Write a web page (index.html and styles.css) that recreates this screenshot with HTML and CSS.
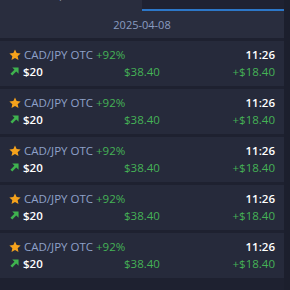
FILE: index.html
```html
<!DOCTYPE html>
<html lang="en">
<head>
  <meta charset="UTF-8" />
  <title>Trades</title>
  <link rel="stylesheet" href="styles.css">
</head>
<body>
  <div class="wrap">
    <div class="main">
      <div class="tabs">
        <div class="tab">Opened</div>
        <div class="tab active">Closed</div>
      </div>

      <div class="date">2025-04-08</div>

      <div class="list" id="list"></div>
    </div>
    <div class="scroll"></div>
  </div>

  <template id="tpl">
    <div class="trade">
      <div class="row">
        <span class="asset">
          <svg class="star" width="12" height="12" viewBox="0 0 24 24"><path d="M12 1l3.3 7.2 7.9.9-5.9 5.3 1.7 7.8L12 18.2l-7 4 1.7-7.8L.8 9.1l7.9-.9z" fill="#f5a21c"/></svg>
          <span class="name">CAD/JPY OTC</span>
          <span class="pct">+92%</span>
        </span>
        <span></span>
        <span class="time">11:26</span>
      </div>
      <div class="row">
        <span class="amount">
          <svg class="arrow" width="9" height="9" viewBox="0 0 10 10"><path d="M1.5 8.5L7 3" stroke="#3fb34f" stroke-width="2.8" fill="none"/><path d="M2.5 0.5h7v7z" fill="#3fb34f"/></svg>
          <span class="stake">$20</span>
        </span>
        <span class="payout">$38.40</span>
        <span class="profit">+$18.40</span>
      </div>
    </div>
  </template>

  <script>
    var list = document.getElementById('list');
    var tpl = document.getElementById('tpl');
    for (var i = 0; i < 5; i++) {
      list.appendChild(tpl.content.cloneNode(true));
    }
  </script>
</body>
</html>
```

FILE: styles.css
```css
body {
  margin: 0;
  background: #1e2130;
  font-family: "Open Sans", Arial, sans-serif;
  font-size: 11.5px;
  color: #fff;
}
.wrap {
  display: flex;
  height: 290px;
  overflow: hidden;
}
.main {
  width: 284px;
  flex-shrink: 0;
}
.scroll {
  flex: 1;
  background: #1c1f2d;
}
.tabs {
  display: flex;
  height: 30px;
  margin-top: -19px;
}
.tab {
  flex: 1;
  background: #292d3e;
  color: #8a94ad;
  font-size: 11px;
  text-align: center;
  line-height: 26px;
}
.tab.active {
  background: #1f2232;
  border-bottom: 2px solid #2c77c8;
  box-sizing: border-box;
}
.date {
  background: #292d3e;
  color: #8a9cc0;
  font-size: 11px;
  text-align: center;
  height: 27px;
  line-height: 28px;
}
.list {
  display: flex;
  flex-direction: column;
  gap: 3px;
  padding-top: 3px;
}
.trade {
  background: #262a3b;
  height: 45px;
  padding: 5px 9px 0 9px;
  box-sizing: border-box;
}
.row {
  display: grid;
  grid-template-columns: 1fr auto 1fr;
  align-items: center;
  height: 17px;
}
.asset, .amount {
  display: flex;
  align-items: center;
}
.star {
  margin-right: 3px;
}
.name {
  color: #8ea1c9;
}
.pct {
  color: #45b256;
  margin-left: 3px;
}
.time, .profit {
  justify-self: end;
}
.time {
  font-weight: 600;
}
.arrow {
  margin-left: 1px;
  margin-right: 4px;
}
.stake {
  font-weight: 600;
}
.payout, .profit {
  color: #45b256;
}
```
